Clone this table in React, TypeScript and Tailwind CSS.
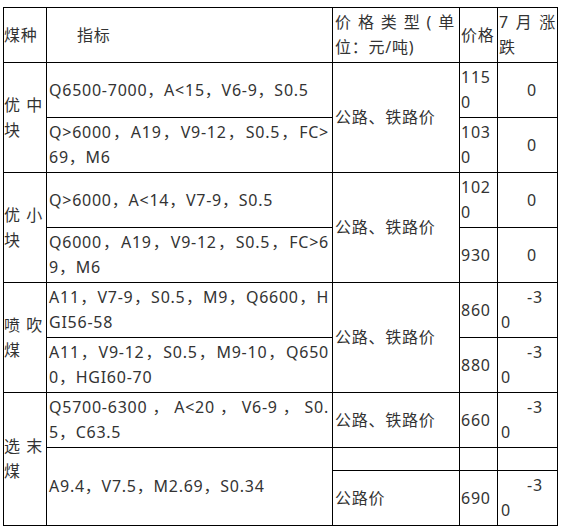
import React from 'react';

// one cell line per entry; every line but the last is stretched to the cell width
const Lines = ({ lines, spread = true }: { lines: string[]; spread?: boolean }) => (
  <div className="w-full">
    {lines.map((line, i) => (
      <div
        key={i}
        className={
          spread && i < lines.length - 1
            ? 'whitespace-nowrap [text-align-last:justify]'
            : 'whitespace-nowrap'
        }
      >
        {line}
      </div>
    ))}
  </div>
);

const Cell = ({ className = '', children }: { className?: string; children?: React.ReactNode }) => (
  <div className={`flex items-center bg-white ${className}`}>{children}</div>
);

const Change = ({ value }: { value: string }) =>
  value === '0' ? (
    <Cell className="pl-[29px]">0</Cell>
  ) : (
    <Cell className="pl-[3px]">
      <div>
        <div className="pl-[26px]">-3</div>
        <div>0</div>
      </div>
    </Cell>
  );

const groups = [
  {
    name: ['优中', '块'],
    rows: [
      { spec: ['Q6500-7000，A<15，V6-9，S0.5'], price: ['115', '0'], change: '0' },
      { spec: ['Q>6000，A19，V9-12，S0.5，FC>', '69，M6'], price: ['103', '0'], change: '0' },
    ],
  },
  {
    name: ['优小', '块'],
    rows: [
      { spec: ['Q>6000，A<14，V7-9，S0.5'], price: ['102', '0'], change: '0' },
      { spec: ['Q6000，A19，V9-12，S0.5，FC>6', '9，M6'], price: ['930'], change: '0' },
    ],
  },
  {
    name: ['喷吹', '煤'],
    rows: [
      { spec: ['A11，V7-9，S0.5，M9，Q6600，H', 'GI56-58'], price: ['860'], change: '-30' },
      { spec: ['A11，V9-12，S0.5，M9-10，Q650', '0，HGI60-70'], price: ['880'], change: '-30' },
    ],
  },
];

const App = () => {
  return (
    <div className="min-h-screen bg-white pl-[3px] pt-[7px] font-['Noto_Sans','Noto_Sans_CJK_SC',sans-serif] text-[16px] leading-[25px] tracking-[0.75px] text-[#333333]">
      <div className="grid w-max grid-cols-[42px_285px_126px_37px_59px] grid-rows-[54px_54px_54px_54px_54px_54px_54px_54px_22px_54px] gap-px bg-black p-px">
        {/* header */}
        <Cell>煤种</Cell>
        <Cell className="pl-[30px]">指标</Cell>
        <Cell className="pl-[2px] pr-[4px]">
          <Lines lines={['价格类型(单', '位：元/吨)']} />
        </Cell>
        <Cell className="pl-[1px]">价格</Cell>
        <Cell className="pl-[1px] pr-[1px]">
          <Lines lines={['7月涨', '跌']} />
        </Cell>

        {groups.map((group, g) => (
          <React.Fragment key={g}>
            <Cell className="row-span-2 pr-[3px]">
              <Lines lines={group.name} />
            </Cell>
            <Cell className="pl-[2px] pr-[3px]">
              <Lines lines={group.rows[0].spec} />
            </Cell>
            <Cell className="row-span-2 pl-[2px]">公路、铁路价</Cell>
            <Cell className="pl-[1px]">
              <Lines lines={group.rows[0].price} spread={false} />
            </Cell>
            <Change value={group.rows[0].change} />
            <Cell className="pl-[2px] pr-[3px]">
              <Lines lines={group.rows[1].spec} />
            </Cell>
            <Cell className="pl-[1px]">
              <Lines lines={group.rows[1].price} spread={false} />
            </Cell>
            <Change value={group.rows[1].change} />
          </React.Fragment>
        ))}

        {/* 选末煤 */}
        <Cell className="row-span-3 pr-[3px]">
          <Lines lines={['选末', '煤']} />
        </Cell>
        <Cell className="pl-[2px] pr-[3px]">
          <Lines lines={['Q5700-6300，A<20，V6-9，S0.', '5，C63.5']} />
        </Cell>
        <Cell className="pl-[2px]">公路、铁路价</Cell>
        <Cell className="pl-[1px]">660</Cell>
        <Change value="-30" />

        <Cell className="row-span-2 pl-[2px]">A9.4，V7.5，M2.69，S0.34</Cell>
        <Cell />
        <Cell />
        <Cell />

        <Cell className="pl-[2px]">公路价</Cell>
        <Cell className="pl-[1px]">690</Cell>
        <Change value="-30" />
      </div>
    </div>
  );
};

export default App;
